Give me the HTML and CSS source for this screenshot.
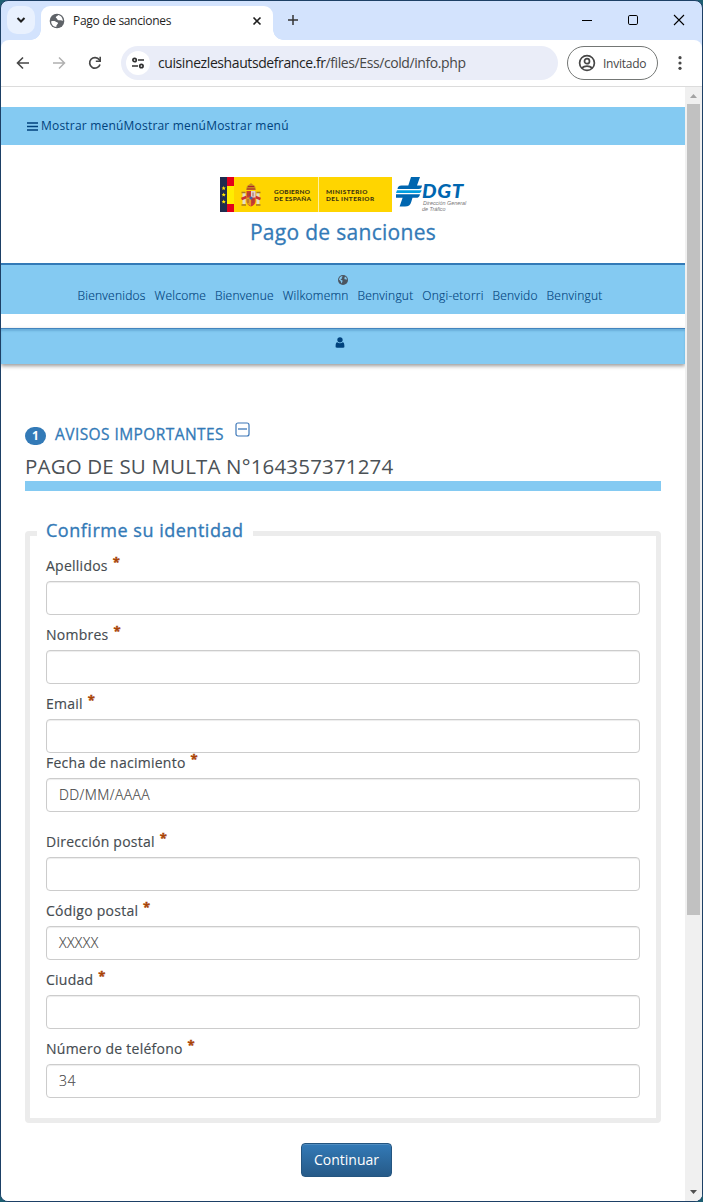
FILE: index.html
```html
<!DOCTYPE html>
<html lang="es">
<head>
<meta charset="utf-8">
<title>Pago de sanciones</title>
<link rel="stylesheet" href="styles.css">
</head>
<body>
<div class="window">
  <div class="tabstrip">
    <div class="tab-search"><svg width="10" height="10" viewBox="0 0 10 10"><path d="M1.500 3l3.500 3.500L8.500 3" fill="none" stroke="#1f1f1f" stroke-width="2"/></svg></div>
    <div class="tab">
      <svg class="favicon" width="16" height="16" viewBox="0 0 16 16"><circle cx="8" cy="8" r="7.300" fill="#5f6368"/><path d="M2.200 8.300c1.500-.3 3.300-.4 4.300.3 1.100.9 2.300.6 2.500 1.700.1 1-1.300 1.100-1.600 2.500l-.1 1.300C4.300 13.800 2 11.400 2.200 8.300zM9 1.900c-.2 1.200-1.900 1.100-2.200 2.100-.1 1.100 1.100 1 1.300 1.900.3 1.200 1.600 1.500 2.800 1.300 1.300-.2 2 .7 2.900.7C13.900 5 12 2.300 9 1.900z" fill="#fff"/></svg>
      <span class="tab-title">Pago de sanciones</span>
      <svg class="tab-close" width="10" height="10" viewBox="0 0 10 10"><path d="M1.500 1.500l7 7M8.500 1.500l-7 7" stroke="#1f1f1f" stroke-width="1.600"/></svg>
    </div>
    <svg class="new-tab" width="12" height="12" viewBox="0 0 12 12"><path d="M6 1v10M1 6h10" stroke="#333" stroke-width="1.500"/></svg>
    <div class="win-buttons">
      <svg width="12" height="12" viewBox="0 0 12 12"><path d="M1 6.500h10" stroke="#000"/></svg>
      <svg width="12" height="12" viewBox="0 0 12 12"><rect x="1.500" y="1.500" width="9" height="9" rx="1.300" fill="none" stroke="#000"/></svg>
      <svg width="12" height="12" viewBox="0 0 12 12"><path d="M1 1l10 10M11 1L1 11" stroke="#000" stroke-width="1.100"/></svg>
    </div>
  </div>
  <div class="toolbar">
    <svg class="tb-icon" width="16" height="16" viewBox="0 0 16 16"><path d="M14 8H3M8 2.500L2.500 8 8 13.500" fill="none" stroke="#474747" stroke-width="1.600"/></svg>
    <svg class="tb-icon" width="16" height="16" viewBox="0 0 16 16"><path d="M2 8h11M8 2.500L13.500 8 8 13.500" fill="none" stroke="#b0b0b0" stroke-width="1.500"/></svg>
    <svg class="tb-icon" width="16" height="16" viewBox="0 0 16 16"><path d="M13 9.500A5.300 5.300 0 1 1 12.300 4.800L13 5.700" fill="none" stroke="#474747" stroke-width="1.700"/><path d="M13.200 1.800v4.400H8.800" fill="none" stroke="#474747" stroke-width="1.600"/></svg>
    <div class="omnibox">
      <span class="site-info"><svg width="14" height="12" viewBox="0 0 14 12"><g fill="none" stroke="#303030" stroke-width="1.700"><circle cx="3.600" cy="3" r="1.700"/><path d="M7 3h6M1 9h6"/><circle cx="10.400" cy="9" r="1.700"/></g></svg></span>
      <span class="url"><span class="host">cuisinezleshautsdefrance.fr</span>/files/Ess/cold/info.php</span>
    </div>
    <div class="profile">
      <svg width="18" height="18" viewBox="0 0 18 18"><g fill="none" stroke="#474747" stroke-width="1.700"><circle cx="9" cy="9" r="7.400"/><circle cx="9" cy="7.200" r="2.500"/><path d="M3.800 14c2.800-2.500 7.600-2.500 10.400 0"/></g></svg>
      <span>Invitado</span>
    </div>
    <svg class="kebab" width="4" height="14" viewBox="0 0 4 14"><g fill="#474747"><circle cx="2" cy="1.700" r="1.600"/><circle cx="2" cy="7" r="1.600"/><circle cx="2" cy="12.300" r="1.600"/></g></svg>
  </div>
  <div class="viewport">
    <div class="page">
      <div class="menu-bar">
        <svg width="11" height="9" viewBox="0 0 11 9"><path d="M0 1h11M0 4.500h11M0 8h11" stroke="#00427d" stroke-width="1.600"/></svg>
        <span>Mostrar menúMostrar menúMostrar menú</span>
      </div>
      <div class="brand">
        <div class="logos">
          <div class="gov">
            <svg width="46" height="35" viewBox="0 0 46 35">
              <rect width="7" height="35" fill="#202c4e"/><rect x="7" width="7" height="35" fill="#e3001b"/><rect x="7" y="9" width="7" height="18" fill="#ffed00"/>
              <g fill="#ffe500"><path d="M3.700 9l.6 1.400 1.500.1-1.100 1 .3 1.500-1.300-.8-1.300.8.300-1.500-1.100-1 1.500-.1z"/><path d="M3.700 15.500l.6 1.400 1.500.1-1.100 1 .3 1.500-1.300-.8-1.300.8.300-1.500-1.100-1 1.500-.1z"/><path d="M3.700 22.500l.6 1.400 1.500.1-1.100 1 .3 1.500-1.300-.8-1.300.8.300-1.500-1.100-1 1.500-.1z"/></g>
              <path d="M26 13l1-4 3-2 1-1 1 1 3 2 1 4z" fill="#c48a21"/><path d="M27 12h8M28 9.500h6" stroke="#b3242b" stroke-width="1.200"/>
              <path d="M22.500 16h3v11h-3zM36.500 16h3v11h-3z" fill="#e4ddc9"/><path d="M21.500 15.500h4M36.500 15.500h4M21.500 28h4.500M36 28h4.500" stroke="#a87924" stroke-width="1.500"/><path d="M21.500 22l5-2M35.500 20l5 2" stroke="#c8322f" stroke-width="2.500"/>
              <path d="M26.500 14h9v10c0 3-2 4.500-4.500 5.500-2.500-1-4.500-2.500-4.500-5.500z" fill="#cf3c31"/><path d="M31 14h4.500v6.500H31z" fill="#ddd2cf"/><path d="M26.500 20.500H31V29c-3-1.500-4.500-2.500-4.500-5z" fill="#e29b22"/><circle cx="31" cy="21" r="1.600" fill="#4561a4"/><path d="M28 15.500v3.500M29.500 15.500v3.500M33 15.500v4M28 22v4M33 22v4" stroke="#914236" stroke-width=".8"/>
            </svg>
            <div class="gov-text gov-name">GOBIERNO<br>DE ESPAÑA</div>
            <div class="gov-text ministry">MINISTERIO<br>DEL INTERIOR</div>
          </div>
          <div class="dgt">
            <svg width="28" height="30" viewBox="0 0 28 30"><path d="M15 0h9l-3 8.500h5c-.3 2.400-1 3.500-3.300 3.500H1.500c.3-2.300 1.300-3.500 4-3.500h6.800z" fill="#0066b0"/><path d="M1 13.200h24.700c-.6 2-1.400 2.800-3.500 2.800H0z" fill="#009ee0"/><path d="M0 17.200h24c-.6 2.600-1.600 3.600-4 3.600h-3.500l-1.200 3.900C14.300 28 12.600 29.500 9 29.500H3.600l3-8.700H0z" fill="#0066b0"/></svg>
            <div class="dgt-text"><b>DGT</b><span class="dgt-line">Dirección General</span><span class="dgt-line">de Tráfico</span></div>
          </div>
        </div>
        <h1>Pago de sanciones</h1>
      </div>
      <div class="languages">
        <svg width="10" height="10" viewBox="0 0 10 10"><circle cx="5" cy="5" r="5" fill="#4b5560"/><path d="M.9 4.500L2 2l2-1.100.6.800-1 1.200.3.900-1.600.8 2.300 1-.3 1.300L3.400 8.500 2.600 6zM7 1.500l1.500 1.300.6 1.900-1.300-.5-.9.300-.6-1.200z" fill="#84caf2"/></svg>
        <div class="language-list"><span>Bienvenidos</span><span>Welcome</span><span>Bienvenue</span><span>Wilkomemn</span><span>Benvingut</span><span>Ongi-etorri</span><span>Benvido</span><span>Benvingut</span></div>
      </div>
      <div class="user-bar"><svg width="10" height="11" viewBox="0 0 10 11"><path d="M2.300 3.100C2.300 1.100 3.300.2 5 .2s2.700.9 2.700 2.900C7.700 4.600 6.500 5.500 5 5.500S2.300 4.600 2.300 3.100zM.6 9.500c0-2.600.4-4.200 1.700-4.200 1.600 1.300 3.800 1.300 5.400 0 1.300 0 1.700 1.600 1.700 4.200 0 .8-.4 1.200-1.100 1.200H1.700c-.7 0-1.100-.4-1.100-1.200z" fill="#00427d"/></svg></div>
      <div class="content">
        <div class="notice"><span class="step">1</span><span class="notice-title">AVISOS IMPORTANTES</span><svg width="15" height="15" viewBox="0 0 15 15"><rect x="1" y="1" width="13" height="13" rx="2" fill="none" stroke="#3d77b8" stroke-width="1.200"/><path d="M3 7h9" stroke="#3d77b8" stroke-width="1.300"/></svg></div>
        <h2>PAGO DE SU MULTA N°164357371274</h2>
        <div class="identity">
          <div class="legend">Confirme su identidad</div>
          <div class="field"><div class="label">Apellidos <i>*</i></div><div class="box"></div></div>
          <div class="field"><div class="label">Nombres <i>*</i></div><div class="box"></div></div>
          <div class="field tight"><div class="label">Email <i>*</i></div><div class="box"></div></div>
          <div class="field loose"><div class="label">Fecha de nacimiento <i>*</i></div><div class="box">DD/MM/AAAA</div></div>
          <div class="field"><div class="label">Dirección postal <i>*</i></div><div class="box"></div></div>
          <div class="field"><div class="label">Código postal <i>*</i></div><div class="box">XXXXX</div></div>
          <div class="field"><div class="label">Ciudad <i>*</i></div><div class="box"></div></div>
          <div class="field"><div class="label">Número de teléfono <i>*</i></div><div class="box">34</div></div>
        </div>
        <div class="continue">Continuar</div>
      </div>
    </div>
    <div class="scrollbar">
      <svg width="17" height="17" viewBox="0 0 17 17"><path d="M5 11l3.500-4 3.500 4z" fill="#a3a3a3"/></svg>
      <div class="thumb"></div>
      <svg class="down" width="17" height="17" viewBox="0 0 17 17"><path d="M5 6h7l-3.500 4z" fill="#505050"/></svg>
    </div>
  </div>
</div>
</body>
</html>
```
FILE: styles.css
```css
* { box-sizing: border-box; }
html { background: #1d5f72; }
body { margin: 0; font-family: "Open Sans", "Noto Sans", sans-serif; }
svg { display: block; flex: none; }
.window { width: 703px; height: 1202px; border: 1px solid #1d4066; border-radius: 8px; overflow: hidden; background: #d3e3fd; display: flex; flex-direction: column; }

.tabstrip { height: 39px; display: flex; flex: none; padding: 5px 0 0 6px; }
.tab-search { width: 28px; height: 28px; border-radius: 10px; background: #e9f1fe; display: flex; align-items: center; justify-content: center; }
.tab { position: relative; width: 232px; height: 34px; margin-left: 6px; padding: 0 11px 5px 8px; background: #fff; border-radius: 9px 9px 0 0; display: flex; align-items: center; }
.tab::before, .tab::after { content: ""; position: absolute; bottom: 0; width: 10px; height: 10px; }
.tab::before { left: -10px; background: radial-gradient(circle at 0 0, transparent 9.5px, #fff 10px); }
.tab::after { right: -10px; background: radial-gradient(circle at 100% 0, transparent 9.5px, #fff 10px); }
.tab-title { margin-left: 8px; font-size: 12px; line-height: 16px; color: #1f1f1f; letter-spacing: -.32px; }
.tab-close { margin-left: auto; }
.new-tab { margin: 8px 0 0 14px; }
.win-buttons { display: flex; gap: 34px; margin: 8px 17px 0 auto; }

.toolbar { height: 47px; flex: none; background: #fff; border-bottom: 1px solid #dcdcdc; border-radius: 8px 8px 0 0; display: flex; align-items: center; padding: 0 20px 0 14px; }
.tb-icon { margin-right: 20px; }
.omnibox { width: 437px; height: 34px; margin-left: -2px; border-radius: 17px; background: #eaedf8; display: flex; align-items: center; padding-left: 5px; }
.site-info { width: 24px; height: 24px; border-radius: 50%; background: #fff; display: flex; align-items: center; justify-content: center; }
.url { margin-left: 8px; font-size: 14px; line-height: 20px; letter-spacing: -.41px; color: #474747; white-space: nowrap; }
.host { color: #1f1f1f; }
.profile { width: 91px; height: 34px; margin-left: 9px; border: 1px solid #747775; border-radius: 17px; display: flex; align-items: center; padding-left: 10px; gap: 7px; font-size: 12px; letter-spacing: -.25px; color: #474747; }
.kebab { margin-left: auto; }

.viewport { flex: 1; display: flex; background: #fff; min-height: 0; }
.page { width: 684px; padding-top: 20px; }
.menu-bar { height: 38px; background: #84caf2; display: flex; align-items: center; gap: 3px; padding: 0 26px; color: #00427d; font-size: 12px; letter-spacing: .2px; }
.menu-bar span { padding-bottom: 2px; }
.brand { height: 118px; padding-top: 32px; }
.logos { display: flex; gap: 4px; margin-left: 219px; height: 35px; }
.gov { width: 172px; height: 35px; background: #ffd500; display: flex; }
.gov-text { font: 900 6.4px/7px Lato, sans-serif; color: #3d3510; white-space: nowrap; padding-top: 11px; }
.gov-name { width: 53px; padding-left: 8px; border-right: 1px solid #fff0a0; letter-spacing: .28px; }
.ministry { padding-left: 7px; letter-spacing: .46px; }
.dgt { display: flex; }
.dgt-text { display: flex; flex-direction: column; margin-left: -2px; padding-top: 7px; font-family: "Liberation Sans", sans-serif; font-style: italic; white-space: nowrap; }
.dgt-text b { font: italic 900 18px/15px Lato, sans-serif; color: #0066b0; letter-spacing: .6px; height: 17px; width: 42px; transform: scaleX(1.14); transform-origin: left; }
.dgt-line { font-size: 5.4px; line-height: 6px; height: 6px; color: #777; }
.dgt-line:nth-child(2) { padding-left: 1px; }
h1 { margin: 6px 0 0; text-align: center; font-size: 21px; line-height: 29px; font-weight: 400; letter-spacing: .3px; color: #337ab7; -webkit-text-stroke: .3px #337ab7; }
.languages { height: 51px; background: #84caf2; border-top: 2px solid #337ab7; display: flex; flex-direction: column; align-items: center; padding-top: 10px; }
.language-list { display: flex; gap: 8.8px; margin: 2px 6px 0 0; font-size: 12px; line-height: 17px; letter-spacing: .24px; color: #00427d; font-weight: 300; -webkit-text-stroke: .15px #00427d; }
.user-bar { height: 36px; margin-top: 14px; background: #84caf2; border-top: 1px solid #4384bd; box-shadow: 0 2px 4px #999, inset 0 2px 2px #69aeda; display: flex; justify-content: center; padding: 8px 6px 0 0; }

.content { padding: 55px 24px 0; display: flex; flex-direction: column; }
.notice { display: flex; height: 31px; color: #337ab7; }
.step { width: 21px; height: 18px; margin-top: 8px; border-radius: 9px; background: #337ab7; color: #fff; font-size: 12px; line-height: 18px; font-weight: 700; text-align: center; }
.notice-title { width: 169px; margin: 4px 11px 0 9px; font-size: 15.5px; line-height: 22px; letter-spacing: .42px; white-space: nowrap; -webkit-text-stroke: .3px #337ab7; }
.notice svg { margin-top: 3px; }
h2 { margin: 0; height: 41px; border-bottom: 10px solid #84caf2; font-size: 20.5px; line-height: 32px; font-weight: 400; letter-spacing: .17px; color: #4b5156; white-space: nowrap; }
.identity { height: 592px; margin-top: 40px; border: 5px solid #ececec; border-radius: 4px; padding: 0 16px; }
.legend { width: 216px; height: 26px; margin: -18px 0 12px -9px; padding-left: 9px; background: #fff; color: #337ab7; font-size: 18px; line-height: 24px; letter-spacing: .52px; white-space: nowrap; -webkit-text-stroke: .35px #337ab7; }
.field { height: 59px; margin-bottom: 10px; }
.field.tight { margin-bottom: 0; }
.field.loose { margin-bottom: 20px; }
.label { height: 25px; font-size: 14px; line-height: 20px; letter-spacing: .25px; color: #454b50; -webkit-text-stroke: .15px #454b50; }
.label i { display: inline-block; height: 20px; margin-left: 1px; font-size: 13px; font-style: normal; font-weight: 700; color: #a94408; -webkit-text-stroke: .4px #a94408; transform: translateY(-4px); }
.box { height: 34px; border: 1px solid #ccc; border-radius: 4px; box-shadow: inset 0 1px 1px rgba(0,0,0,.075); padding: 0 12px; font-size: 14px; line-height: 32px; font-weight: 300; letter-spacing: .4px; color: #444; -webkit-text-stroke: .15px #444; }
.continue { align-self: center; width: 91px; height: 34px; margin: 20px 0 0 7px; border: 1px solid #245580; border-radius: 4px; background: linear-gradient(#337ab7, #265a88); box-shadow: inset 0 1px 0 rgba(255,255,255,.15); text-align: center; color: #fff; font-size: 14px; line-height: 32px; }

.scrollbar { width: 17px; background: #f0f0f0; display: flex; flex-direction: column; align-items: center; }
.thumb { width: 13px; height: 811px; background: #c1c1c1; }
.down { margin-top: auto; }
```
